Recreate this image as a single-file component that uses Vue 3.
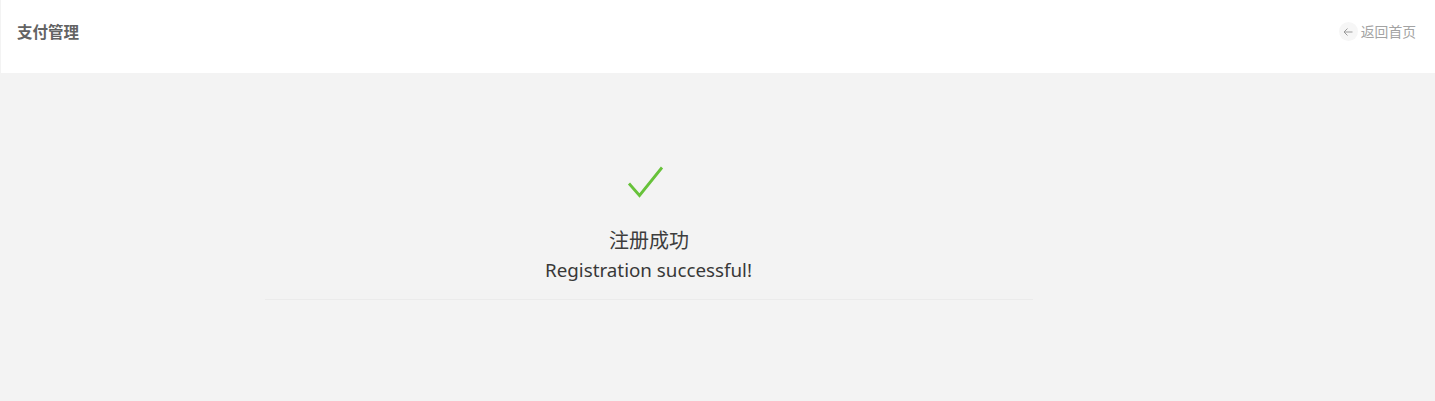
<template>
  <div class="page">
    <header class="top">
      <h1 class="title">支付管理</h1>
      <a class="back">
        <span class="back-icon">
          <svg width="10" height="10" viewBox="0 0 10 10" fill="none" stroke="#9a9a9a" stroke-width="1">
            <path d="M9.5 5H1M4.5 1.5L1 5l3.5 3.5" />
          </svg>
        </span>
        <span class="back-text">返回首页</span>
      </a>
    </header>
    <main class="body">
      <section class="result">
        <svg class="check" width="38" height="34" viewBox="0 0 38 34" fill="none" stroke="#67c23a" stroke-width="2.8">
          <path d="M2 17.5L12.5 29.5L35 1.5" />
        </svg>
        <div class="zh">注册成功</div>
        <div class="en">Registration successful!</div>
      </section>
    </main>
  </div>
</template>

<script setup>
</script>

<style>
html, body { margin: 0; background: #f3f3f3; }
</style>

<style scoped>
.page {
  height: 401px;
  overflow: hidden;
  background: #f3f3f3;
  font-family: "Noto Sans", "Noto Sans CJK SC", sans-serif;
}
.top {
  display: flex;
  align-items: center;
  justify-content: space-between;
  height: 73px;
  margin-left: 1px;
  padding: 0 19px 10px 16px;
  box-sizing: border-box;
  background: #fff;
}
.title {
  margin: 0;
  font-size: 15.5px;
  font-weight: 700;
  color: #636363;
}
.back {
  display: flex;
  align-items: center;
  gap: 3px;
  font-size: 13.8px;
  color: #a3a3a3;
}
.back-text {
  padding-bottom: 2px;
}
.back-icon {
  display: flex;
  align-items: center;
  justify-content: center;
  width: 19px;
  height: 19px;
  border-radius: 50%;
  background: #f6f6f6;
}
.body {
  padding: 93px 402px 0 265px;
}
.result {
  display: flex;
  flex-direction: column;
  align-items: center;
  height: 133px;
  border-bottom: 1px solid #ebebeb;
}
.check {
  flex-shrink: 0;
  margin-right: 6px;
}
.zh {
  margin-top: 28px;
  font-size: 20px;
  line-height: 26px;
  color: #3d3d3d;
}
.en {
  margin-top: 4px;
  margin-right: 1px;
  font-size: 18.8px;
  line-height: 25px;
  color: #383838;
}
</style>
